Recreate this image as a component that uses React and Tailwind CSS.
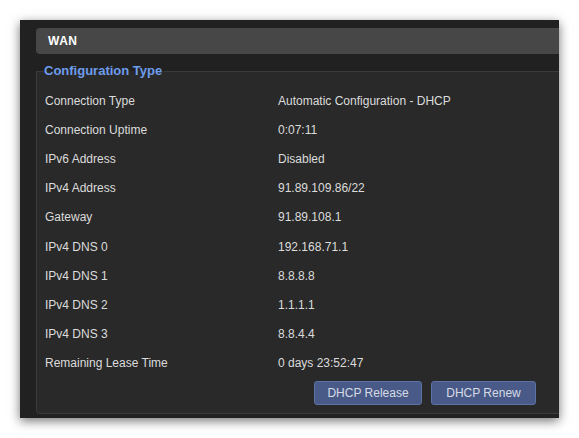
const rows = [
  ['Connection Type', 'Automatic Configuration - DHCP'],
  ['Connection Uptime', '0:07:11'],
  ['IPv6 Address', 'Disabled'],
  ['IPv4 Address', '91.89.109.86/22'],
  ['Gateway', '91.89.108.1'],
  ['IPv4 DNS 0', '192.168.71.1'],
  ['IPv4 DNS 1', '8.8.8.8'],
  ['IPv4 DNS 2', '1.1.1.1'],
  ['IPv4 DNS 3', '8.8.4.4'],
  ['Remaining Lease Time', '0 days 23:52:47'],
];

export default function App() {
  return (
    <div className="h-[438px] w-[579px] overflow-hidden bg-white pl-[20px] pt-[20px] font-['Liberation_Sans',Arial,sans-serif] text-[12px] text-[#dcdcdc]">
      <div className="h-[398px] w-[539px] overflow-hidden bg-[#212121] pl-[16px] pt-[8px] shadow-[0_3px_10px_rgba(0,0,0,0.55)]">
        <div className="flex h-[26px] w-[560px] items-center rounded-l-[4px] bg-[#474747] pl-[12px] text-[12px] font-bold tracking-[0.5px] text-white">
          WAN
        </div>
        <fieldset className="mt-[10px] h-[350px] w-[560px] rounded-bl-[4px] border border-[#3b3b3b] bg-[#292929] pl-[8px] pr-0 pt-0">
          <legend className="-ml-[1px] px-0 pr-[2px] text-[13px] font-bold leading-[14px] text-[#6d9ceb]">
            Configuration Type
          </legend>
          <div className="mt-[8px] flex flex-col">
            {rows.map(([k, v]) => (
              <div key={k} className="flex h-[29.2px] items-center">
                <span className="w-[233px]">{k}</span>
                <span>{v}</span>
              </div>
            ))}
          </div>
          <div className="ml-[269px] mt-[3px] flex gap-[9px]">
            <button className="h-[24px] w-[108px] rounded-[3px] border border-[#5c71a4] bg-[#495a88] text-[12px] text-[#d6dbe6]">
              DHCP Release
            </button>
            <button className="h-[24px] w-[105px] rounded-[3px] border border-[#5c71a4] bg-[#495a88] text-[12px] text-[#d6dbe6]">
              DHCP Renew
            </button>
          </div>
        </fieldset>
      </div>
    </div>
  );
}
